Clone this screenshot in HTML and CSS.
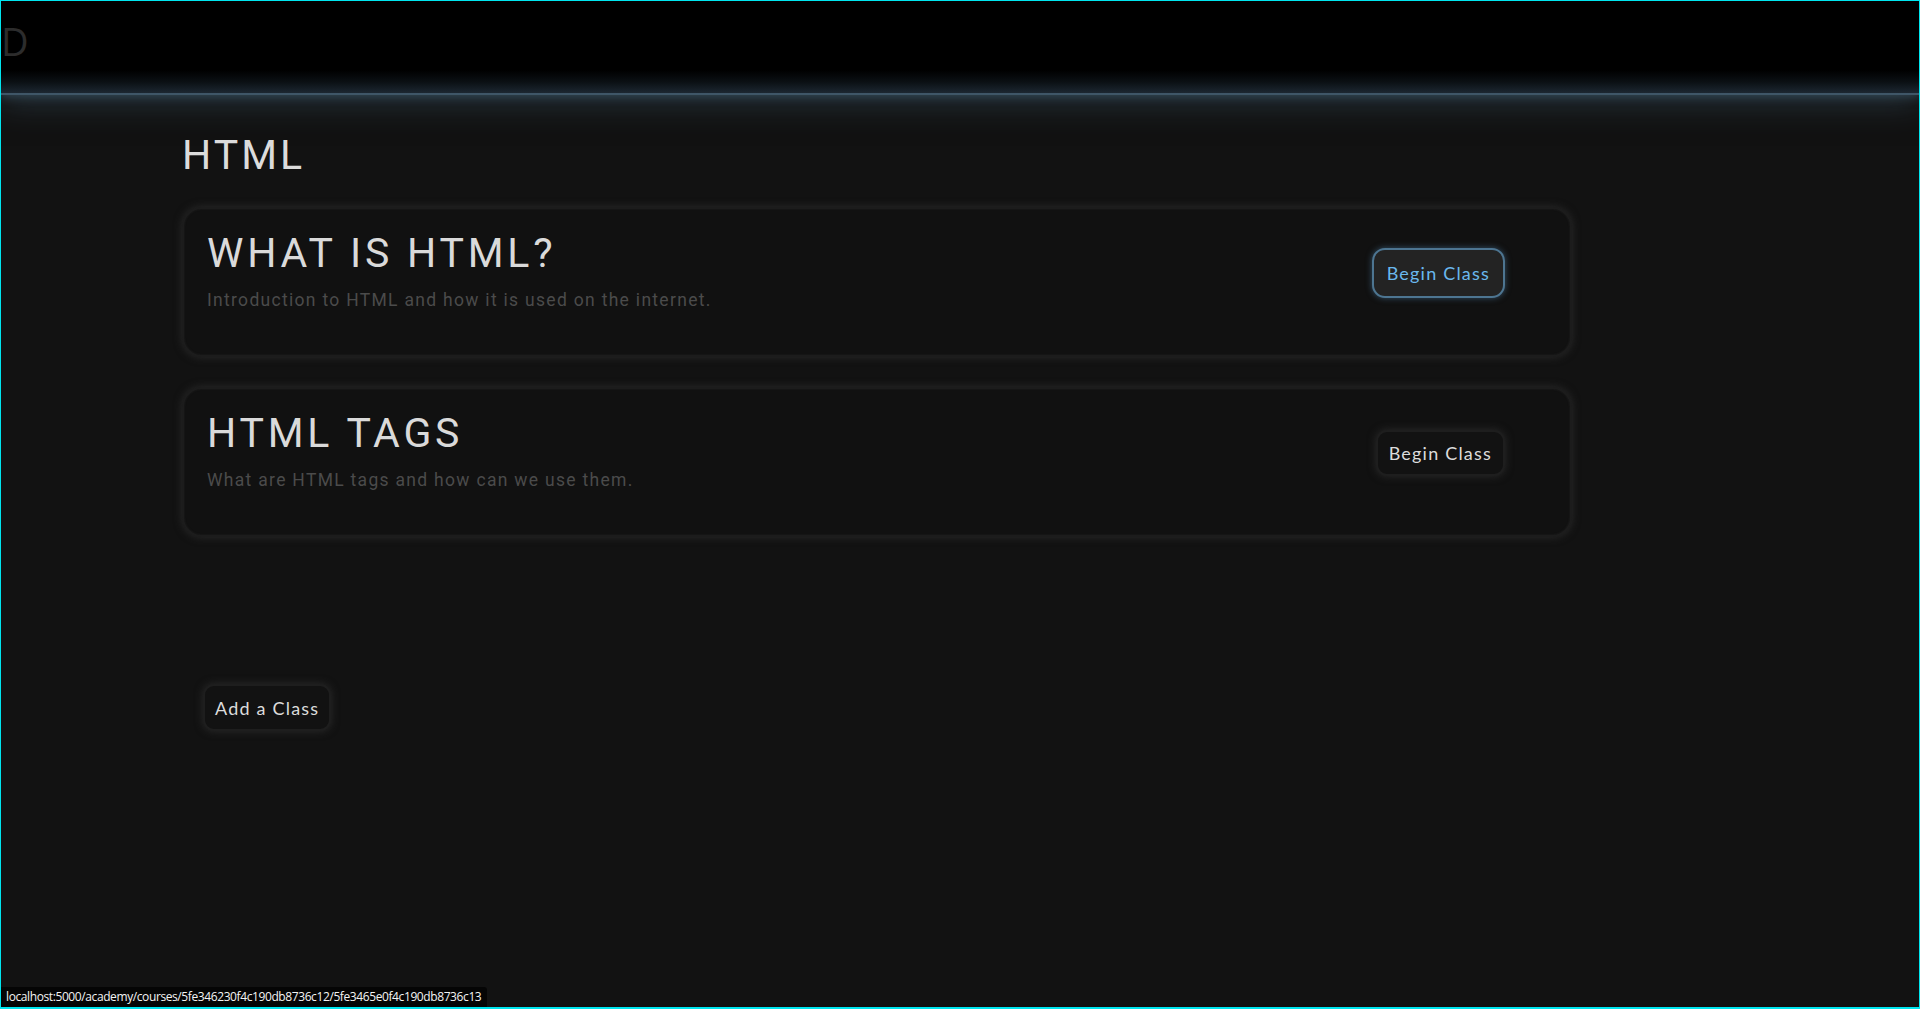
FILE: index.html
```html
<!DOCTYPE html>
<html>
<head>
<meta charset="utf-8">
<link rel="stylesheet" href="styles.css">
</head>
<body>
<div class="frame">
  <header class="topbar">
    <span class="logo">D</span>
  </header>
  <main class="content">
    <h1 class="page-title">HTML</h1>
    <section class="card">
      <div class="card-text">
        <h2 class="card-title">WHAT IS HTML?</h2>
        <p class="card-desc">Introduction to HTML and how it is used on the internet.</p>
      </div>
      <button class="btn btn-active">Begin Class</button>
    </section>
    <section class="card">
      <div class="card-text">
        <h2 class="card-title">HTML TAGS</h2>
        <p class="card-desc">What are HTML tags and how can we use them.</p>
      </div>
      <button class="btn">Begin Class</button>
    </section>
    <div class="add-row">
      <button class="btn btn-add">Add a Class</button>
    </div>
  </main>
  <div class="status">localhost:5000/academy/courses/5fe346230f4c190db8736c12/5fe3465e0f4c190db8736c13</div>
</div>
</body>
</html>
```
FILE: styles.css
```css
html, body {
  margin: 0;
  padding: 0;
  background: #121212;
}
.frame {
  position: relative;
  box-sizing: border-box;
  width: 1920px;
  height: 1009px;
  border: 1px solid #00e5ee;
  border-bottom-width: 2px;
  background: #121212;
  overflow: hidden;
}
.topbar {
  position: relative;
  z-index: 1;
  height: 92px;
  background: linear-gradient(to bottom, #000 0%, #000 75%, #0b1014 88%, #1c2731 100%);
  border-bottom: 2px solid #3f5667;
  box-shadow: 0 6px 30px rgba(58, 86, 104, 0.55), 0 2px 8px rgba(60, 85, 100, 0.6);
  display: flex;
  align-items: center;
}
.logo {
  font-family: "Open Sans", sans-serif;
  font-size: 38px;
  color: #2c2c2c;
  margin-left: 0;
  margin-top: -12px;
}
.content {
  padding: 36px 0 0 181px;
  font-family: "Roboto", "DejaVu Sans", sans-serif;
}
.page-title {
  margin: 0 0 28px 0;
  font-weight: 400;
  font-size: 41px;
  letter-spacing: 3px;
  color: #dcdcdc;
  line-height: 48px;
}
.card {
  box-sizing: border-box;
  width: 1390px;
  height: 150px;
  margin-bottom: 30px;
  background: #111111;
  border-radius: 20px;
  border: 2px solid #1c1c1c;
  box-shadow: 0 0 9px rgba(44, 44, 44, 0.95), inset 0 0 2px rgba(60,60,60,0.4);
  display: flex;
  align-items: flex-start;
  justify-content: space-between;
  padding: 20px 65px 0 23px;
}
.card-title {
  margin: 0;
  font-weight: 400;
  font-size: 41px;
  letter-spacing: 3.8px;
  color: #dadada;
  line-height: 48px;
}
.card-desc {
  margin: 13px 0 0 0;
  font-size: 17.5px;
  letter-spacing: 1.3px;
  color: #4b4b4b;
  font-weight: 400;
  line-height: 20px;
}
.btn {
  font-family: "Lato", "Nunito", sans-serif;
  font-size: 18px;
  letter-spacing: 1.2px;
  color: #dcdcdc;
  background: #121212;
  border: 2px solid #1e1e1e;
  border-radius: 11px;
  height: 46px;
  padding: 0 11px;
  margin-top: 21px;
  box-shadow: 0 0 8px rgba(45, 45, 45, 0.9);
}
.btn-active {
  color: #6ab8ee;
  background: #232323;
  border: 2px solid #4d7591;
  height: 50px;
  padding: 0 13px;
  border-radius: 13px;
  margin-top: 19px;
  box-shadow: 0 0 6px rgba(80, 130, 170, 0.55);
}
.add-row {
  padding: 117px 0 0 21px;
}
.btn-add {
  height: 47px;
  padding: 0 10px;
  margin-top: 0;
}
.status {
  position: absolute;
  left: 0;
  bottom: 0;
  height: 20px;
  padding: 0 6px 0 5px;
  background: #050505;
  border-top-right-radius: 3px;
  color: #f4f4f4;
  font-family: "Open Sans", "Noto Sans", sans-serif;
  font-size: 12px;
  line-height: 20px;
  letter-spacing: -0.4px;
}
```
